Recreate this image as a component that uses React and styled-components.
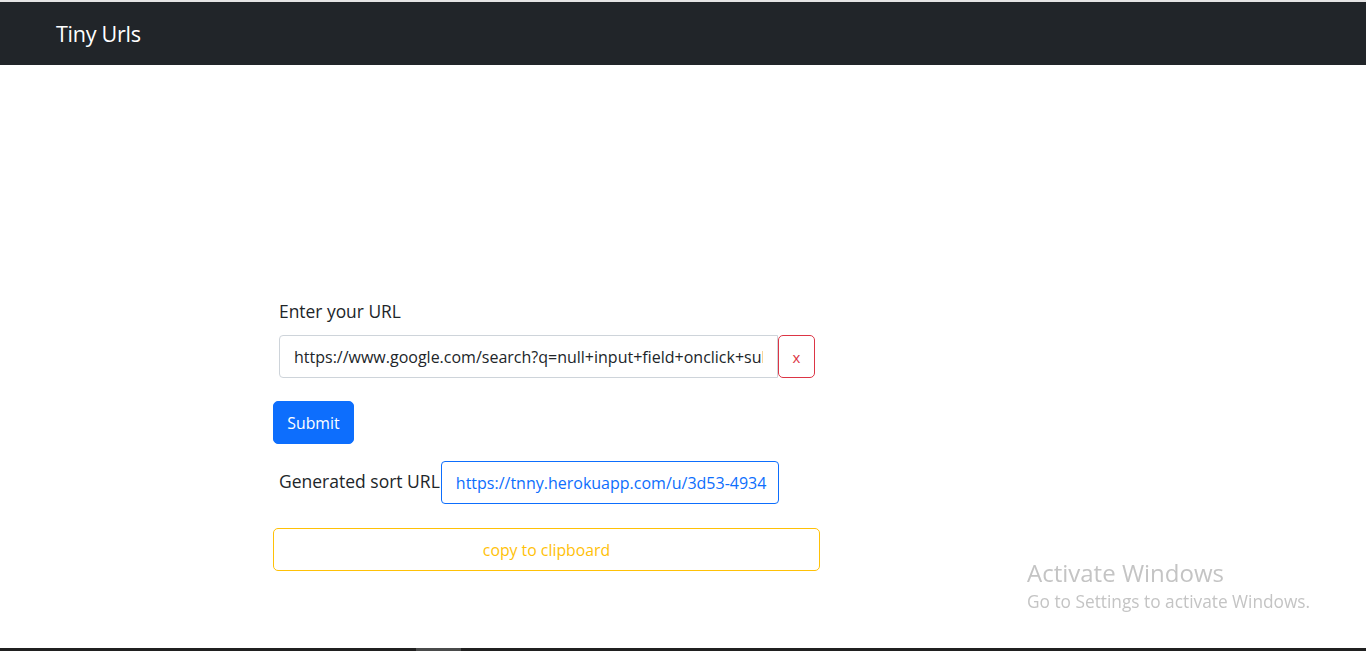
import styled, { createGlobalStyle } from "styled-components";

const GlobalStyle = createGlobalStyle`
  html, body {
    margin: 0;
    padding: 0;
    background: #fff;
  }
  body {
    font-family: "Open Sans", "Noto Sans", sans-serif;
    color: #212529;
  }
`;

const Page = styled.div`
  min-height: 100vh;
  display: flex;
  flex-direction: column;
  border-top: 2px solid #e4e4e4;
  box-sizing: border-box;
`;

const Navbar = styled.nav`
  height: 63px;
  background-color: #212529;
  display: flex;
  align-items: center;
  padding-left: 56px;
`;

const Brand = styled.a`
  color: #fff;
  font-size: 21.6px;
  text-decoration: none;
  letter-spacing: -0.3px;
`;

const Main = styled.main`
  flex: 1;
  padding: 234px 0 0 273px;
`;

const Column = styled.div`
  width: 547px;
  display: flex;
  flex-direction: column;
  align-items: flex-start;
`;

const Label = styled.label`
  margin-left: 6px;
  font-size: 17.4px;
  line-height: 24px;
  margin-bottom: 12px;
`;

const InputGroup = styled.div`
  display: flex;
  margin-left: 6px;
`;

const Input = styled.input`
  width: 499px;
  height: 43px;
  box-sizing: border-box;
  border: 1px solid #ced4da;
  border-radius: 4px 0 0 4px;
  padding: 0 14px;
  font-family: inherit;
  font-size: 16px;
  color: #212529;
  outline: none;
`;

const Button = styled.button`
  height: 43px;
  box-sizing: border-box;
  border-radius: 5px;
  font-family: inherit;
  font-size: 15.8px;
  cursor: pointer;
  border: 1px solid ${(p) => p.$color};
  background: ${(p) => (p.$solid ? p.$color : "#fff")};
  color: ${(p) => (p.$solid ? "#fff" : p.$color)};
  width: ${(p) => p.$width || "auto"};
  margin-top: ${(p) => p.$top || "0"};
  padding: 0;
`;

const ClearButton = styled(Button)`
  width: 37px;
  font-size: 15px;
`;

const ResultRow = styled.div`
  display: flex;
  align-items: center;
  margin-top: 17px;
  margin-left: 6px;
`;

const ResultLabel = styled.span`
  font-size: 17.5px;
  line-height: 24px;
  padding-bottom: 3px;
  margin-right: 1px;
`;

const ResultLink = styled.a`
  width: 338px;
  height: 43px;
  box-sizing: border-box;
  display: flex;
  align-items: center;
  padding: 0 14px;
  border: 1px solid #0d6efd;
  border-radius: 4px;
  color: #0d6efd;
  font-size: 16px;
  text-decoration: none;
  white-space: nowrap;
  overflow: hidden;
`;

const Taskbar = styled.div`
  height: 3px;
  background: #202020;
  display: flex;
`;

const TaskSlot = styled.div`
  width: 45px;
  margin-left: ${(p) => p.$left || "0"};
  background: ${(p) => p.$bg};
`;

const Watermark = styled.div`
  position: fixed;
  left: 1027px;
  top: 558px;
  color: #c4c4c4;
  font-family: "Open Sans", "Noto Sans", sans-serif;
  pointer-events: none;
`;

const WatermarkTitle = styled.div`
  font-size: 24px;
  line-height: 30px;
`;

const WatermarkText = styled.div`
  font-size: 17.3px;
  line-height: 28px;
`;

export default function App() {
  return (
    <>
      <GlobalStyle />
      <Page>
        <Navbar>
          <Brand href="#">Tiny Urls</Brand>
        </Navbar>
        <Main>
          <Column>
            <Label>Enter your URL</Label>
            <InputGroup>
              <Input
                type="text"
                defaultValue="https://www.google.com/search?q=null+input+field+onclick+submit&oq=null"
              />
              <ClearButton $color="#dc3545">x</ClearButton>
            </InputGroup>
            <Button $color="#0d6efd" $solid $width="81px" $top="23px">
              Submit
            </Button>
            <ResultRow>
              <ResultLabel>Generated sort URL</ResultLabel>
              <ResultLink href="#">https://tnny.herokuapp.com/u/3d53-4934</ResultLink>
            </ResultRow>
            <Button $color="#ffc107" $width="547px" $top="24px">
              copy to clipboard
            </Button>
          </Column>
        </Main>
        <Taskbar>
          <TaskSlot $left="416px" $bg="#4a4b4b" />
        </Taskbar>
      </Page>
      <Watermark>
        <WatermarkTitle>Activate Windows</WatermarkTitle>
        <WatermarkText>Go to Settings to activate Windows.</WatermarkText>
      </Watermark>
    </>
  );
}
